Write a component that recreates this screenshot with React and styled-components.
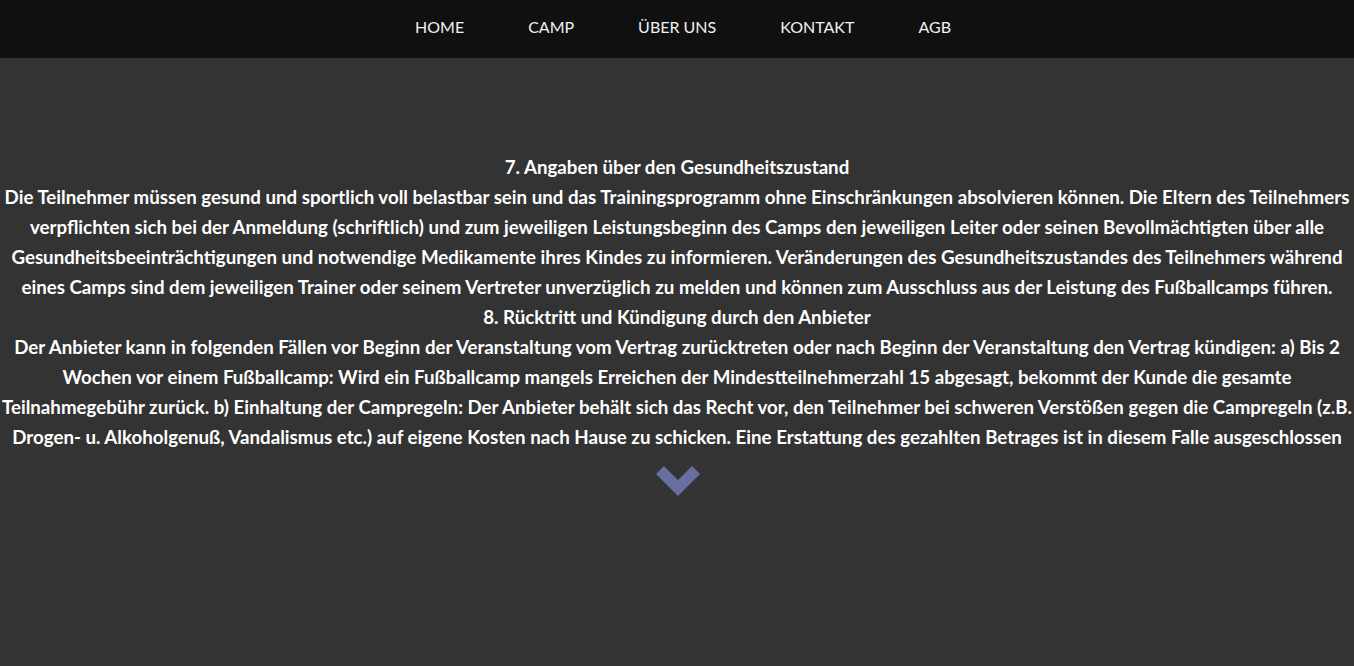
import React from 'react';
import styled, { createGlobalStyle } from 'styled-components';

const GlobalStyle = createGlobalStyle`
  html, body {
    margin: 0;
    padding: 0;
    background-color: #333333;
    font-family: Lato, "Open Sans", sans-serif;
  }
`

const Nav = styled.nav`
  box-sizing: border-box;
  display: flex;
  justify-content: center;
  align-items: center;
  height: 58px;
  padding: 0 0 5px 12px;
  background-color: #101010;
`

const NavLink = styled.a`
  padding: 0 32px;
  color: #f2f2f2;
  font-size: 16px;
  text-decoration: none;
`

const Content = styled.main`
  padding-top: 94px;
  height: 514px;
  color: #ffffff;
  text-align: center;
  font-size: 18.72px;
  font-weight: 700;
  line-height: 30px;
`

const Heading = styled.div``

const Paragraph = styled.p`
  margin: 0;
`

const ArrowWrap = styled.div`
  display: flex;
  justify-content: center;
  padding-top: 14px;
  padding-left: 1px;
`

const items = ['HOME', 'CAMP', 'ÜBER UNS', 'KONTAKT', 'AGB'];

const App = () => {
  return (
    <>
      <GlobalStyle />
      <Nav>
        {items.map(item => <NavLink key={item} href="#">{item}</NavLink>)}
      </Nav>
      <Content>
        <Heading>7. Angaben über den Gesundheitszustand</Heading>
        <Paragraph>
          Die Teilnehmer müssen gesund und sportlich voll belastbar sein und das Trainingsprogramm ohne Einschränkungen absolvieren können. Die Eltern des Teilnehmers verpflichten sich bei der Anmeldung (schriftlich) und zum jeweiligen Leistungsbeginn des Camps den jeweiligen Leiter oder seinen Bevollmächtigten über alle Gesundheitsbeeinträchtigungen und notwendige Medikamente ihres Kindes zu informieren. Veränderungen des Gesundheitszustandes des Teilnehmers während eines Camps sind dem jeweiligen Trainer oder seinem Vertreter unverzüglich zu melden und können zum Ausschluss aus der Leistung des Fußballcamps führen.
        </Paragraph>
        <Heading>8. Rücktritt und Kündigung durch den Anbieter</Heading>
        <Paragraph>
          Der Anbieter kann in folgenden Fällen vor Beginn der Veranstaltung vom Vertrag zurücktreten oder nach Beginn der Veranstaltung den Vertrag kündigen: a) Bis 2 Wochen vor einem Fußballcamp: Wird ein Fußballcamp mangels Erreichen der Mindestteilnehmerzahl 15 abgesagt, bekommt der Kunde die gesamte Teilnahmegebühr zurück. b) Einhaltung der Campregeln: Der Anbieter behält sich das Recht vor, den Teilnehmer bei schweren Verstößen gegen die Campregeln (z.B. Drogen- u. Alkoholgenuß, Vandalismus etc.) auf eigene Kosten nach Hause zu schicken. Eine Erstattung des gezahlten Betrages ist in diesem Falle ausgeschlossen
        </Paragraph>
        <ArrowWrap>
          <svg width="44" height="30" viewBox="0 0 44 30">
            <polygon points="0,8 8,0 22,14 36,0 44,8 22,30" fill="#676f9f" />
          </svg>
        </ArrowWrap>
      </Content>
    </>
  );
}

export default App;
